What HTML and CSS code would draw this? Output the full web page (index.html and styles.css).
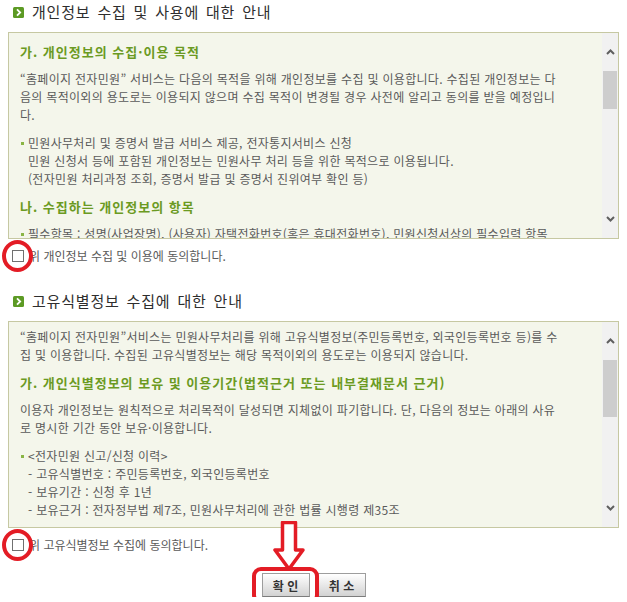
FILE: index.html
```html
<!DOCTYPE html>
<html lang="ko">
<head>
  <meta charset="UTF-8">
  <meta name="viewport" content="width=device-width, initial-scale=1.0">
  <title>개인정보 수집 및 이용 동의</title>
  <link rel="stylesheet" href="styles.css">
</head>
<body>
  <div class="wrap">

    <section class="section">
      <h2 class="section-title">
        <svg class="title-icon" width="11" height="11" viewBox="0 0 11 11"><rect width="11" height="11" rx="1.5" fill="#5c9a24"/><path d="M4 2.3 L7.2 5.5 L4 8.7" fill="none" stroke="#fff" stroke-width="1.8"/></svg>
        개인정보 수집 및 사용에 대한 안내
      </h2>
      <div class="terms">
        <div class="terms-body">
          <h3>가. 개인정보의 수집·이용 목적</h3>
          <p>“홈페이지 전자민원” 서비스는 다음의 목적을 위해 개인정보를 수집 및 이용합니다. 수집된 개인정보는 다<br>음의 목적이외의 용도로는 이용되지 않으며 수집 목적이 변경될 경우 사전에 알리고 동의를 받을 예정입니<br>다.</p>
          <ul>
            <li>민원사무처리 및 증명서 발급 서비스 제공, 전자통지서비스 신청<br>민원 신청서 등에 포함된 개인정보는 민원사무 처리 등을 위한 목적으로 이용됩니다.<br>(전자민원 처리과정 조회, 증명서 발급 및 증명서 진위여부 확인 등)</li>
          </ul>
          <h3>나. 수집하는 개인정보의 항목</h3>
          <ul>
            <li>필수항목 : 성명(사업장명), (사용자) 자택전화번호(혹은 휴대전화번호), 민원신청서상의 필수입력 항목</li>
          </ul>
        </div>
        <div class="scroll">
          <span class="scroll-btn"><svg width="9" height="6" viewBox="0 0 9 6"><path d="M1 5 L4.5 1.5 L8 5" fill="none" stroke="#5f5f5f" stroke-width="2"/></svg></span>
          <span class="scroll-thumb thumb-short"></span>
          <span class="scroll-track"></span>
          <span class="scroll-btn"><svg width="9" height="6" viewBox="0 0 9 6"><path d="M1 1 L4.5 4.5 L8 1" fill="none" stroke="#5f5f5f" stroke-width="2"/></svg></span>
        </div>
      </div>
      <label class="agree">
        <input type="checkbox" class="agree-check">
        <span class="mark-circle"></span>
        위 개인정보 수집 및 이용에 동의합니다.
      </label>
    </section>

    <section class="section">
      <h2 class="section-title">
        <svg class="title-icon" width="11" height="11" viewBox="0 0 11 11"><rect width="11" height="11" rx="1.5" fill="#5c9a24"/><path d="M4 2.3 L7.2 5.5 L4 8.7" fill="none" stroke="#fff" stroke-width="1.8"/></svg>
        고유식별정보 수집에 대한 안내
      </h2>
      <div class="terms">
        <div class="terms-body terms-body-tight">
          <p>“홈페이지 전자민원”서비스는 민원사무처리를 위해 고유식별정보(주민등록번호, 외국인등록번호 등)를 수<br>집 및 이용합니다. 수집된 고유식별정보는 해당 목적이외의 용도로는 이용되지 않습니다.</p>
          <h3>가. 개인식별정보의 보유 및 이용기간(법적근거 또는 내부결재문서 근거)</h3>
          <p>이용자 개인정보는 원칙적으로 처리목적이 달성되면 지체없이 파기합니다. 단, 다음의 정보는 아래의 사유<br>로 명시한 기간 동안 보유·이용합니다.</p>
          <ul>
            <li>&lt;전자민원 신고/신청 이력&gt;<br>- 고유식별번호 : 주민등록번호, 외국인등록번호<br>- 보유기간 : 신청 후 1년<br>- 보유근거 : 전자정부법 제7조, 민원사무처리에 관한 법률 시행령 제35조</li>
          </ul>
        </div>
        <div class="scroll">
          <span class="scroll-btn"><svg width="9" height="6" viewBox="0 0 9 6"><path d="M1 5 L4.5 1.5 L8 5" fill="none" stroke="#5f5f5f" stroke-width="2"/></svg></span>
          <span class="scroll-thumb thumb-long"></span>
          <span class="scroll-track"></span>
          <span class="scroll-btn"><svg width="9" height="6" viewBox="0 0 9 6"><path d="M1 1 L4.5 4.5 L8 1" fill="none" stroke="#5f5f5f" stroke-width="2"/></svg></span>
        </div>
      </div>
      <label class="agree">
        <input type="checkbox" class="agree-check">
        <span class="mark-circle"></span>
        위 고유식별정보 수집에 동의합니다.
      </label>
    </section>

    <div class="actions">
      <span class="btn-wrap">
        <svg class="mark-arrow" width="32" height="50" viewBox="0 0 32 50"><path d="M9.5 1.5 H22.5 V29 H30 L16 48 L2 29 H9.5 Z" fill="#fff" stroke="#e31c25" stroke-width="3.5" stroke-linejoin="round"/></svg>
        <button class="btn">확 인</button>
        <span class="mark-frame"></span>
      </span>
      <button class="btn">취 소</button>
    </div>

  </div>
</body>
</html>
```

FILE: styles.css
```css
body {
  margin: 0;
  background-color: #fff;
  font-family: "Noto Sans CJK KR", "Noto Sans", sans-serif;
  font-size: 12px;
  color: #5a5a5a;
}

.wrap {
  padding: 2px 8px 0;
}

.section + .section {
  margin-top: 26px;
}

.section-title {
  display: flex;
  align-items: center;
  gap: 8px;
  margin: 0 0 10px;
  padding-left: 5px;
  font-size: 15px;
  font-weight: normal;
  line-height: 20px;
  letter-spacing: 0.8px;
  word-spacing: 2px;
  color: #2e2e2e;
}

.title-icon {
  flex: none;
}

.terms {
  display: flex;
  height: 205px;
  border: 1px solid #c6c8a2;
  background-color: #f4f6eb;
}

.terms-body {
  flex: 1;
  overflow: hidden;
  padding: 10px 10px 0 11px;
  line-height: 18px;
  letter-spacing: 0.3px;
  white-space: nowrap;
}

.terms-body-tight {
  padding-top: 6px;
}

.terms-body h3 {
  margin: 10px 0 9px;
  font-size: 13px;
  line-height: 18px;
  letter-spacing: 1px;
  color: #6b9a22;
}

.terms-body h3:first-child {
  margin-top: 0;
}

.terms-body p,
.terms-body ul {
  margin: 10px 0 0;
}

.terms-body p:first-child {
  margin-top: 0;
}

.terms-body h3 + p,
.terms-body h3 + ul {
  margin-top: 0;
}

.terms-body ul {
  list-style: none;
  padding: 0;
}

.terms-body li {
  padding-left: 8px;
  background: linear-gradient(#8ab545, #8ab545) no-repeat 1px 8px / 3px 3px;
}

.scroll {
  display: flex;
  flex-direction: column;
  width: 16px;
  background-color: #f1f1f1;
}

.scroll-btn {
  display: flex;
  align-items: center;
  justify-content: center;
  height: 38px;
  flex: none;
}

.scroll-thumb {
  flex: none;
  margin: 0 1px;
  background-color: #cdcdcd;
}

.thumb-short {
  height: 38px;
}

.thumb-long {
  height: 57px;
}

.scroll-track {
  flex: 1;
}

.agree {
  position: relative;
  display: flex;
  align-items: center;
  margin-top: 8px;
  line-height: 18px;
  color: #5a5a5a;
}

.agree-check {
  appearance: none;
  width: 12px;
  height: 12px;
  margin: 0 5px 0 4px;
  border: 1px solid #707070;
  background-color: #fff;
}

.mark-circle {
  position: absolute;
  left: -6px;
  top: -7px;
  width: 31px;
  height: 32px;
  box-sizing: border-box;
  border: 4px solid #e31c25;
  border-radius: 50%;
}

.actions {
  display: flex;
  justify-content: center;
  gap: 8px;
  margin-top: 19px;
}

.btn-wrap {
  position: relative;
  display: flex;
}

.btn {
  width: 48px;
  height: 24px;
  padding: 0;
  border: 1px solid #9d9d9d;
  border-bottom-color: #7c7c7c;
  background: linear-gradient(#ffffff, #e6e6e6 55%, #d2d2d2);
  font-family: "Noto Sans CJK KR", "Noto Sans", sans-serif;
  font-size: 12px;
  font-weight: bold;
  color: #333;
}

.mark-frame {
  position: absolute;
  left: -10px;
  top: -6px;
  width: 67px;
  height: 37px;
  box-sizing: border-box;
  border: 4px solid #e31c25;
  border-radius: 9px;
}

.mark-arrow {
  position: absolute;
  left: 11px;
  top: -52px;
}
```
